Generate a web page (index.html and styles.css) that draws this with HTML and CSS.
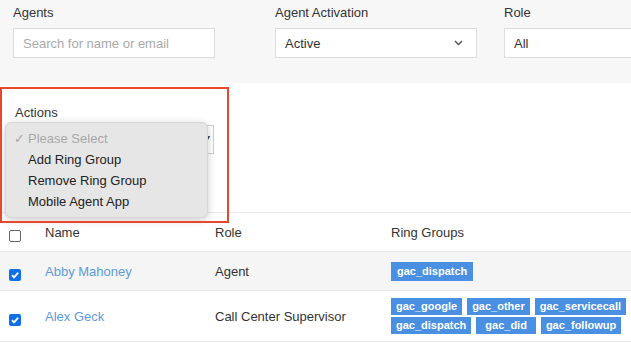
FILE: index.html
```html
<!DOCTYPE html>
<html lang="en">
<head>
  <meta charset="UTF-8">
  <title>Agents</title>
  <link rel="stylesheet" href="styles.css">
</head>
<body>

  <div class="filters">
    <div class="field">
      <label>Agents</label>
      <input class="box" type="text" placeholder="Search for name or email">
    </div>
    <div class="field">
      <label>Agent Activation</label>
      <div class="box select">
        <span>Active</span>
        <svg class="chev" width="9" height="6" viewBox="0 0 9 6"><path d="M1 1l3.5 3.5L8 1" fill="none" stroke="#555" stroke-width="1.5"/></svg>
      </div>
    </div>
    <div class="field">
      <label>Role</label>
      <div class="box select role"><span>All</span></div>
    </div>
  </div>

  <section class="actions">
    <label>Actions</label>
    <div class="box select action-select"><span class="tiny-arrow">&#9662;</span></div>

    <ul class="menu">
      <li class="muted"><span class="tick">&#10003;</span>Please Select</li>
      <li>Add Ring Group</li>
      <li>Remove Ring Group</li>
      <li>Mobile Agent App</li>
    </ul>
    <div class="highlight"></div>
  </section>

  <table class="agents">
    <thead>
      <tr>
        <th class="check"><span class="cb"></span></th>
        <th class="col-name">Name</th>
        <th class="col-role">Role</th>
        <th class="col-groups">Ring Groups</th>
      </tr>
    </thead>
    <tbody>
      <tr class="shaded">
        <td class="check"><span class="cb on"></span></td>
        <td><a href="#">Abby Mahoney</a></td>
        <td>Agent</td>
        <td><div class="tags"><span class="tag big">gac_dispatch</span></div></td>
      </tr>
      <tr class="tall">
        <td class="check"><span class="cb on"></span></td>
        <td><a href="#">Alex Geck</a></td>
        <td>Call Center Supervisor</td>
        <td>
          <div class="tags">
            <span class="tag">gac_google</span>
            <span class="tag">gac_other</span>
            <span class="tag">gac_servicecall</span>
            <span class="tag">gac_dispatch</span>
            <span class="tag wide">gac_did</span>
            <span class="tag">gac_followup</span>
          </div>
        </td>
      </tr>
    </tbody>
  </table>

</body>
</html>
```

FILE: styles.css
```css
* {
  box-sizing: border-box;
}
body {
  margin: 0;
  background: white;
  color: #333;
  font-family: "Liberation Sans", Arial, sans-serif;
  font-size: 13px;
  overflow: hidden;
}
label {
  display: block;
  line-height: 16px;
  margin-bottom: 4px;
}
.filters {
  background: #f7f7f7;
  height: 83px;
  padding: 5px 0 0 13px;
  display: grid;
  grid-template-columns: 262px 229px 1fr;
}
.filters label {
  margin-bottom: 7px;
}
.box {
  display: flex;
  align-items: center;
  width: 202px;
  height: 30px;
  border: 1px solid #dcdcdc;
  background: white;
  padding: 0 9px;
  font-family: inherit;
  font-size: 13px;
  color: #333;
}
.box::placeholder {
  color: #a9a9a9;
}
.select {
  justify-content: space-between;
}
.chev {
  margin-right: 4px;
}
.role {
  width: 140px;
  border-right: none;
}
.actions {
  position: relative;
  z-index: 1;
  height: 129px;
  padding: 22px 0 0 15px;
}
.action-select {
  width: 199px;
  height: 29px;
  justify-content: flex-end;
  padding-right: 3px;
  border-color: #cfcfcf;
}
.tiny-arrow {
  font-size: 8px;
  color: #444;
  margin-top: -4px;
}
.menu {
  position: absolute;
  left: 5px;
  top: 39px;
  width: 203px;
  margin: 0;
  padding: 5px 0;
  list-style: none;
  background: #e7e6e6;
  border: 1px solid #d6d6d6;
  border-radius: 6px;
  box-shadow: 0 2px 8px rgba(0, 0, 0, 0.2);
}
.menu li {
  height: 21px;
  line-height: 21px;
  padding-left: 22px;
  color: #222;
  font-size: 13px;
}
.menu .muted {
  color: #a8a8a8;
}
.tick {
  display: inline-block;
  width: 0;
  margin-left: -14px;
  margin-right: 14px;
}
.highlight {
  position: absolute;
  left: 0;
  top: 4px;
  width: 229px;
  height: 136px;
  border: 2px solid #e5482d;
}
.agents {
  width: 631px;
  border-collapse: collapse;
  table-layout: fixed;
}
.agents tr {
  border-top: 1px solid #e8e8e8;
}
.agents tbody tr:last-child {
  border-bottom: 1px solid #e8e8e8;
}
.agents th,
.agents td {
  padding: 0;
  text-align: left;
  vertical-align: middle;
}
.agents th {
  font-weight: normal;
  height: 39px;
  color: #333;
}
.agents td {
  height: 39px;
}
.check {
  width: 45px;
}
.check .cb {
  margin: 7px 0 0 9px;
}
.col-name {
  width: 170px;
}
.col-role {
  width: 176px;
}
.col-groups {
  width: 240px;
}
.shaded {
  background: #f5f5f5;
}
.tall td {
  height: 51px;
}
.cb {
  display: block;
  width: 12px;
  height: 12px;
  border: 1px solid #666;
  border-radius: 2px;
  background: white;
}
.cb.on {
  border: none;
  background: #0f6fe8 url("data:image/svg+xml;utf8,<svg xmlns='http://www.w3.org/2000/svg' width='12' height='12' viewBox='0 0 12 12'><path d='M3 6.2l2 2.1L9.2 3.6' fill='none' stroke='white' stroke-width='1.8'/></svg>") no-repeat center;
}
a {
  color: #5d9ad8;
  text-decoration: none;
}
.tags {
  display: flex;
  flex-wrap: wrap;
  gap: 2px 5px;
  width: 240px;
}
.tag {
  background: #4a90e2;
  color: white;
  font-size: 11px;
  font-weight: bold;
  line-height: 17px;
  padding: 0 5px;
}
.tag.big {
  line-height: 19px;
  padding: 0 6px;
}
.tag.wide {
  padding: 0 9px;
}
```
